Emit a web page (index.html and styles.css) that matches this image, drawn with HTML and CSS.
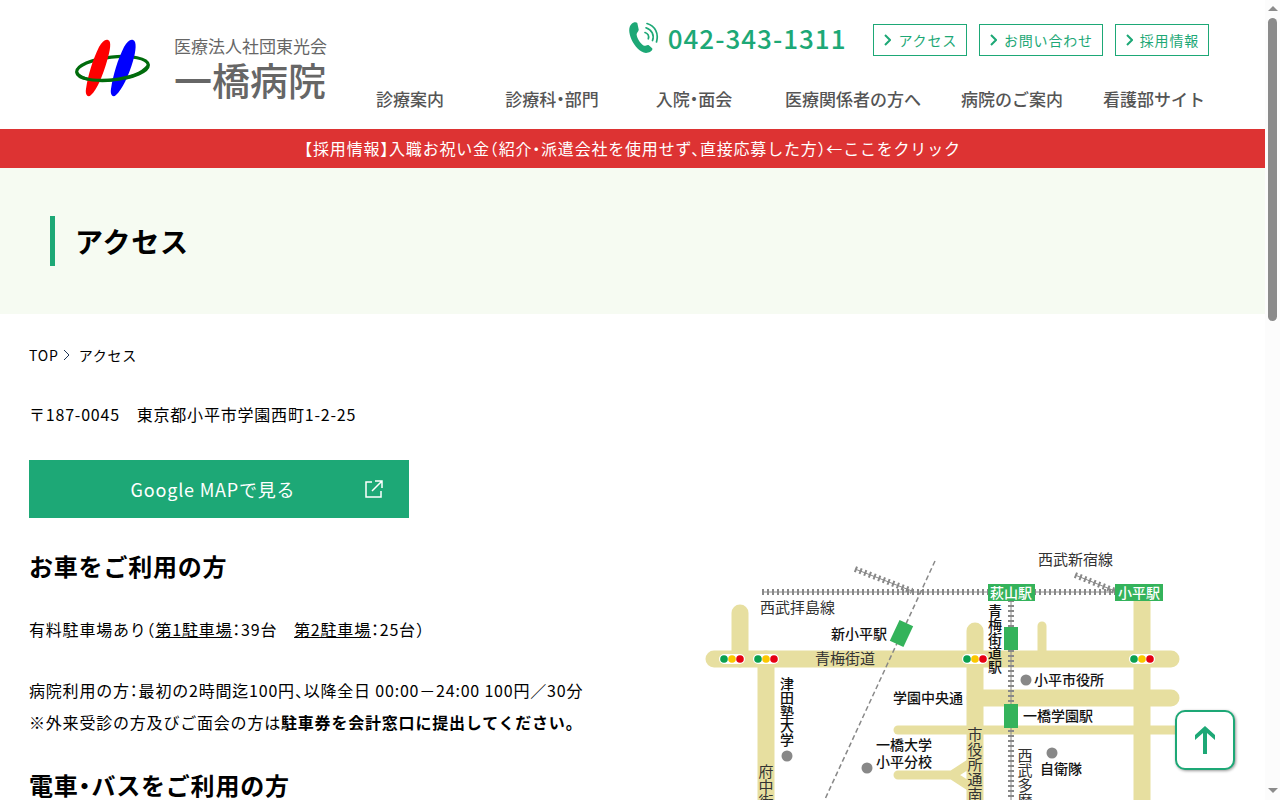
FILE: index.html
```html
<!DOCTYPE html>
<html lang="ja">
<head>
<meta charset="utf-8">
<meta name="viewport" content="width=device-width, initial-scale=1">
<title>アクセス | 一橋病院</title>
<link rel="stylesheet" href="styles.css">
</head>
<body>
<div class="frame">
<div class="page">
  <header class="header">
    <a class="logo" href="#">
      <svg class="logo-mark" viewBox="0 0 76 60" aria-hidden="true">
        <ellipse cx="37.500" cy="29.500" rx="36" ry="11.500" fill="none" stroke="#006c0c" stroke-width="3.200" transform="rotate(-6 37.5 29.5)"/>
        <path d="M33 1 C37 2 35 12 32 22 C28 36 22 51 16 56 C13 59 10 56 11 50 C13 36 18 20 24 8 C27 3 30 0 33 1 Z" fill="#fe0000"/>
        <path d="M58 1 C62 2 61 12 58 22 C54 36 47 51 41 56 C38 59 35 56 36 50 C38 36 43 20 49 8 C52 3 55 0 58 1 Z" fill="#0000fe"/>
        <path d="M2 34 C6 41 22 42 37 41 C54 39 67 35 73 27" fill="none" stroke="#006c0c" stroke-width="3.200"/>
      </svg>
      <span class="logo-text"><span class="logo-corp">医療法人社団東光会</span><span class="logo-name">一橋病院</span></span>
    </a>
    <div class="header-main">
      <div class="header-top">
        <a class="tel" href="tel:0423431311">
          <svg class="tel-icon" viewBox="0 0 30 32" aria-hidden="true">
            <path d="M2.500 2 C4 0 7.500-.3 8.300 1 L9.700 7.500 C9.900 9.500 7.500 10.500 7.600 12.500 C8 16.500 11 21 14.500 23.500 C16.500 24.500 17.500 22.500 19.500 23 L23.200 26.300 C24.300 28.500 20.500 31 17 31 C11 30.500 5.500 24 2.500 17.500 C-.3 11-.8 5.500 2.500 2 Z" fill="#1da876"/>
            <g fill="none" stroke="#1da876" stroke-width="1.700" stroke-linecap="round"><path d="M18 1.500 C26 4 30 11 27.500 20"/><path d="M17 5.800 C23 8 25.500 13 23.500 18.500"/><path d="M16 10.500 C19 11.500 20.300 14 19.300 16.800"/></g>
          </svg>
          <span>042-343-1311</span>
        </a>
        <a class="chip" href="#"><svg viewBox="0 0 7 12" aria-hidden="true"><path d="M1 1 L6 6 L1 11"/></svg>アクセス</a>
        <a class="chip" href="#"><svg viewBox="0 0 7 12" aria-hidden="true"><path d="M1 1 L6 6 L1 11"/></svg>お問い合わせ</a>
        <a class="chip" href="#"><svg viewBox="0 0 7 12" aria-hidden="true"><path d="M1 1 L6 6 L1 11"/></svg>採用情報</a>
      </div>
      <nav class="nav">
        <a href="#">診療案内</a><a href="#">診療科・部門</a><a href="#">入院・面会</a><a href="#">医療関係者の方へ</a><a href="#">病院のご案内</a><a href="#">看護部サイト</a>
      </nav>
    </div>
  </header>
  <a class="notice" href="#">【採用情報】入職お祝い金（紹介・派遣会社を使用せず、直接応募した方）←ここをクリック</a>
  <div class="hero"><h1 class="hero-title">アクセス</h1></div>
  <main class="main">
    <nav class="crumbs" aria-label="パンくず"><a href="#">TOP</a><svg viewBox="0 0 7 12" aria-hidden="true"><path d="M1 1 L6 6 L1 11"/></svg><span>アクセス</span></nav>
    <p class="address">〒187-0045　東京都小平市学園西町1-2-25</p>
    <a class="map-button" href="#"><span>Google MAPで見る</span>
      <svg viewBox="0 0 18 18" aria-hidden="true"><path d="M7 2 H1 V17 H16 V11 M10 1 H17 V8 M17 1 L7 11"/></svg>
    </a>
    <div class="access">
      <div class="guide">
        <h2>お車をご利用の方</h2>
        <p>有料駐車場あり（<a href="#">第1駐車場</a>：39台　<a href="#">第2駐車場</a>：25台）</p>
        <p>病院利用の方：最初の2時間迄100円、以降全日 00:00－24:00 100円／30分<br>※外来受診の方及びご面会の方は<strong>駐車券を会計窓口に提出してください。</strong></p>
        <h2>電車・バスをご利用の方</h2>
      </div>
      <svg class="map" viewBox="700 548 500 300" role="img" aria-label="周辺地図">
        <g class="road" stroke-width="17">
          <path d="M740 613 V659"/><path d="M714 659 H1171"/><path d="M766 659 V860" /><path d="M975 631 V860"/><path d="M975 698 H1171"/><path d="M1142 595 V860"/>
        </g>
        <g class="road" stroke-width="9">
          <path d="M1042 626 V655"/><path d="M898 730 H1190"/><path d="M898 775 H952 L972 762 M952 775 L972 788"/>
        </g>
        <g class="rail">
          <path d="M762 592 H990 M1034 592 H1116 M855 569 L912 591 M1075 575 L1115 591 M1011 600 V850"/>
          <path class="ties" d="M762 592 H990 M1034 592 H1116 M855 569 L912 591 M1075 575 L1115 591 M1011 600 V850"/>
        </g>
        <path d="M935 561 L820 810" fill="none" stroke="#888" stroke-width="1.500" stroke-dasharray="5 3"/>
        <g fill="#34b35b">
          <rect x="988" y="584" width="47" height="17"/><rect x="1115" y="584" width="48" height="17"/>
          <rect x="1004" y="627" width="14" height="23"/><rect x="1004" y="704" width="14" height="24"/>
          <rect x="894" y="622" width="15" height="23" transform="rotate(25 901.5 633.5)"/>
        </g>
        <g>
          <path class="signal-back" d="M724 659 H740 M758 659 H774 M967 659 H983 M1134 659 H1150"/>
          <g fill="#0aa04f"><circle cx="724" cy="659" r="3.800"/><circle cx="758" cy="659" r="3.800"/><circle cx="967" cy="659" r="3.800"/><circle cx="1134" cy="659" r="3.800"/></g>
          <g fill="#fbc800"><circle cx="732" cy="659" r="3.800"/><circle cx="766" cy="659" r="3.800"/><circle cx="975" cy="659" r="3.800"/><circle cx="1142" cy="659" r="3.800"/></g>
          <g fill="#e60012"><circle cx="740" cy="659" r="3.800"/><circle cx="774" cy="659" r="3.800"/><circle cx="983" cy="659" r="3.800"/><circle cx="1150" cy="659" r="3.800"/></g>
        </g>
        <g fill="#888"><circle cx="787" cy="756" r="5.500"/><circle cx="867" cy="768" r="5.500"/><circle cx="1026" cy="680" r="5.500"/><circle cx="1052" cy="753" r="5.500"/></g>
        <g class="line-name">
          <text x="1038" y="565">西武新宿線</text><text x="760" y="613">西武拝島線</text><text x="815" y="664">青梅街道</text>
          <text class="vertical" x="766" y="764">府中街道</text><text class="vertical" x="975" y="727">市役所通南</text><text class="vertical" x="1025" y="748">西武多摩湖線</text>
        </g>
        <g class="place">
          <text x="831" y="639">新小平駅</text><text x="893" y="703">学園中央通</text><text x="876" y="750">一橋大学</text><text x="876" y="767">小平分校</text>
          <text x="1034" y="685">小平市役所</text><text x="1023" y="721">一橋学園駅</text><text x="1040" y="774">自衛隊</text>
          <text class="vertical" x="995" y="604">青梅街道駅</text><text class="vertical" x="787" y="677">津田塾大学</text>
          <text class="station" x="990" y="598">萩山駅</text><text class="station" x="1118" y="598">小平駅</text>
        </g>
      </svg>
    </div>
  </main>
  <button class="to-top" type="button" aria-label="ページの先頭へ"><svg viewBox="0 0 20 28" aria-hidden="true"><path d="M10 0 L20 9 V14 L12 7 V28 H8 V7 L0 14 V9 Z"/></svg></button>
</div>
<div class="scrollbar" aria-hidden="true">
  <span class="arrow-up"></span><span class="thumb"></span><span class="arrow-down"></span>
</div>
</div>
</body>
</html>
```

FILE: styles.css
```css
* { box-sizing: border-box; }
body {
  margin: 0;
  background: #fff;
  color: #000;
  font-family: "Noto Sans CJK JP", sans-serif;
  font-size: 16px;
  line-height: 32px;
  letter-spacing: 0.05em;
  font-feature-settings: "halt";
}
a { color: inherit; text-decoration: none; }
h1, h2, p { margin: 0; }
svg { display: block; flex: none; }

.frame { display: grid; grid-template-columns: minmax(0, 1fr) 15px; height: 100vh; overflow: hidden; }
.page { overflow: hidden; }

.header { display: flex; justify-content: space-between; padding: 24px 40px 14px 75px; }
.logo { display: flex; gap: 23px; padding-top: 12px; color: #666; letter-spacing: 0; }
.logo-mark { width: 76px; height: 60px; margin-top: 3px; }
.logo-text { display: flex; flex-direction: column; white-space: nowrap; }
.logo-corp { font-size: 17px; line-height: 20px; }
.logo-name { font-size: 38px; line-height: 46px; font-weight: 500; }
.header-main { display: flex; flex-direction: column; gap: 27px; }
.header-top { display: flex; align-items: center; justify-content: flex-end; gap: 12px; padding-right: 16px; height: 32px; }
.tel { display: flex; align-items: center; gap: 9px; margin-right: 15px; padding-bottom: 4px; color: #1da876; font-size: 26px; font-weight: 500; letter-spacing: 1px; }
.tel-icon { width: 30px; height: 32px; }
.chip { display: flex; align-items: center; gap: 7px; padding: 0 9px 0 10px; border: 1px solid #1da876; color: #1da876; font-size: 14px; line-height: 30px; white-space: nowrap; }
.chip svg { width: 7px; height: 12px; fill: none; stroke: currentColor; stroke-width: 2; }
.nav { display: flex; color: #555; font-size: 17px; font-weight: 500; letter-spacing: 0; white-space: nowrap; }
.nav a { min-width: 142px; padding: 0 20px; text-align: center; }

.notice { display: block; padding: 3px 20px 4px; background: #dd3333; color: #fff; text-align: center; }
.hero { padding: 48px 50px; background: #f6fbf2; }
.hero-title { border-left: 5px solid #1da876; padding-left: 20px; font-size: 28px; line-height: 50px; }

.main { padding: 25px 29px 0; }
.crumbs { display: flex; align-items: center; gap: 4px; font-size: 14px; }
.crumbs svg { width: 7px; height: 12px; margin-right: 5px; fill: none; stroke: #1d3557; stroke-width: 1; }
.address { margin-top: 27px; }
.map-button { display: grid; grid-template-columns: 1fr auto; align-items: center; width: 380px; max-width: 100%; margin-top: 30px; padding: 13px 26px 13px 32px; background: #1da876; color: #fff; font-size: 18px; text-align: center; }
.map-button svg { width: 18px; height: 18px; fill: none; stroke: currentColor; stroke-width: 1.5; }
.access { display: grid; grid-template-columns: minmax(0, 1fr) 500px; margin-top: 30px; padding-right: 36px; }
.guide { display: flex; flex-direction: column; gap: 29px; }
.guide h2 { font-size: 24px; line-height: 36px; }
.guide a { text-decoration: underline; }

.map { width: 100%; letter-spacing: 0; font-feature-settings: normal; }
.road { fill: none; stroke: #e7dfa0; stroke-linecap: round; }
.rail { fill: none; stroke: #888; stroke-width: 1; }
.ties { stroke-width: 6; stroke-dasharray: 2 3; }
.signal-back { stroke: #fff; stroke-width: 10; stroke-linecap: round; }
.line-name { fill: #333; font-size: 15px; }
.place { fill: #111; font-size: 14px; font-weight: 500; }
.station { fill: #fff; }
.vertical { writing-mode: vertical-rl; text-orientation: upright; }

.to-top { position: fixed; right: 45px; bottom: 30px; display: flex; align-items: center; justify-content: center; width: 60px; height: 60px; padding: 0; border: 2px solid #1da876; border-radius: 10px; background: #fff; box-shadow: 1px 1px 3px rgba(0, 0, 0, 0.4); }
.to-top svg { width: 20px; height: 28px; fill: #1da876; }

.scrollbar { display: flex; flex-direction: column; align-items: center; padding: 6px 0 7px; background: #fcfcfc; }
.thumb { width: 9px; height: 303px; margin-top: 7px; border-radius: 5px; background: #8b8b8b; }
.arrow-up, .arrow-down { border: 5px solid transparent; }
.arrow-up { border-top: 0; border-bottom-color: #8b8b8b; }
.arrow-down { margin-top: auto; border-bottom: 0; border-top-color: #8b8b8b; }
```
